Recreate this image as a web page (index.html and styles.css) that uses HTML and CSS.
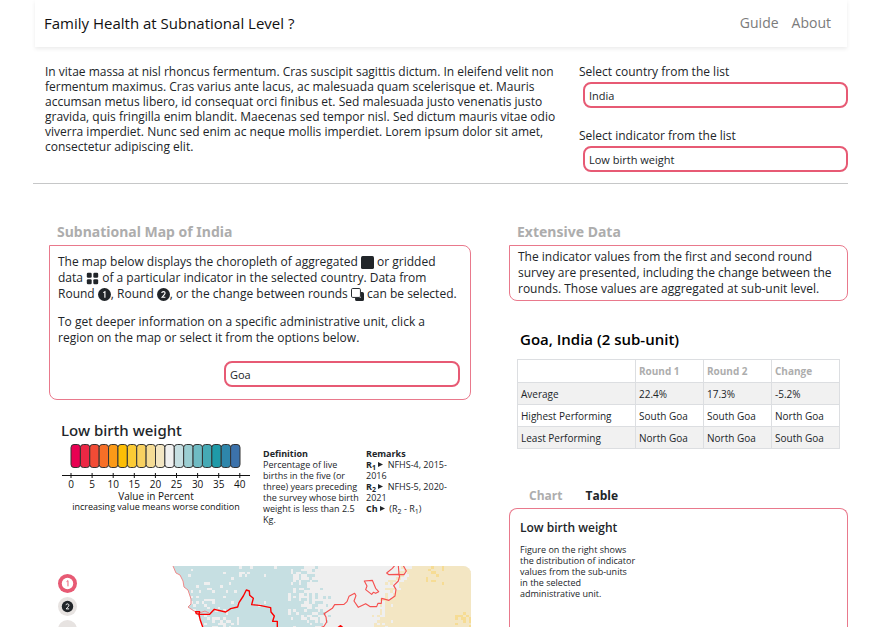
FILE: index.html
```html
<!DOCTYPE html>
<html lang="en">
<head>
<meta charset="utf-8">
<title>Family Health at Subnational Level</title>
<meta name="viewport" content="width=device-width, initial-scale=1">
<link rel="stylesheet" href="styles.css">
</head>
<body>
<div class="page">
  <header class="navbar">
    <h1 class="brand">Family Health at Subnational Level ?</h1>
    <nav class="links">
      <a href="#guide">Guide</a>
      <a href="#about">About</a>
    </nav>
  </header>

  <section class="intro">
    <p class="intro-text">In vitae massa at nisl rhoncus fermentum. Cras suscipit sagittis dictum. In eleifend velit non fermentum maximus. Cras varius ante lacus, ac malesuada quam scelerisque et. Mauris accumsan metus libero, id consequat orci finibus et. Sed malesuada justo venenatis justo gravida, quis fringilla enim blandit. Maecenas sed tempor nisl. Sed dictum mauris vitae odio viverra imperdiet. Nunc sed enim ac neque mollis imperdiet. Lorem ipsum dolor sit amet, consectetur adipiscing elit.</p>
    <div class="filters">
      <div class="field">
        <label for="country">Select country from the list</label>
        <select id="country" class="picker"><option>India</option></select>
      </div>
      <div class="field">
        <label for="indicator">Select indicator from the list</label>
        <select id="indicator" class="picker"><option>Low birth weight</option></select>
      </div>
    </div>
  </section>

  <main class="columns">
    <section class="map-column">
      <h2 class="section-title">Subnational Map of India</h2>
      <div class="card map-card">
        <p>The map below displays the choropleth of aggregated
          <svg class="icon" viewBox="0 0 16 16"><rect width="16" height="16" rx="2"/></svg>
          or gridded data
          <svg class="icon" viewBox="0 0 16 16"><rect x="1" y="1" width="6" height="6" rx="1.5"/><rect x="9" y="1" width="6" height="6" rx="1.5"/><rect x="1" y="9" width="6" height="6" rx="1.5"/><rect x="9" y="9" width="6" height="6" rx="1.5"/></svg>
          of a particular indicator in the selected country. Data from Round
          <svg class="icon" viewBox="0 0 16 16"><circle cx="8" cy="8" r="8"/><path d="M6.5 5.7 8.5 4.5V12" class="mark"/></svg>, Round
          <svg class="icon" viewBox="0 0 16 16"><circle cx="8" cy="8" r="8"/><path d="M5.9 6.3C5.9 3.8 10 3.9 10 6.3 10 7.8 7.6 9.4 6.2 11.4H10.3" class="mark"/></svg>, or the change between rounds
          <svg class="icon" viewBox="0 0 16 16"><path d="M5 12h7V5h2a2 2 0 0 1 2 2v7a2 2 0 0 1-2 2H7a2 2 0 0 1-2-2z"/><rect x=".6" y=".6" width="11" height="11" rx="1.5" class="hollow"/></svg>
          can be selected.</p>
        <p>To get deeper information on a specific administrative unit, click a region on the map or select it from the options below.</p>
        <select class="picker region" aria-label="Region"><option>Goa</option></select>
      </div>

      <div class="legend-row">
        <div class="legend">
          <h3 class="legend-title">Low birth weight</h3>
          <svg class="scale" viewBox="0 0 190 72" id="scale">
            <g id="swatches"></g>
            <path class="axis" d="M1 32.5H189"/>
            <g id="ticks"></g>
            <text x="95" y="57" class="scale-name">Value in Percent</text>
            <text x="95" y="67" class="scale-note">increasing value means worse condition</text>
          </svg>
        </div>
        <div class="note definition">
          <strong>Definition</strong>
          <p>Percentage of live births in the five (or three) years preceding the survey whose birth weight is less than 2.5 Kg.</p>
        </div>
        <div class="note remarks">
          <strong>Remarks</strong>
          <p><b>R<sub>1</sub></b> <svg class="arrow" viewBox="0 0 6 6"><path d="M0 0 6 3 0 6z"/></svg> NFHS-4, 2015-2016</p>
          <p><b>R<sub>2</sub></b> <svg class="arrow" viewBox="0 0 6 6"><path d="M0 0 6 3 0 6z"/></svg> NFHS-5, 2020-2021</p>
          <p><b>Ch</b> <svg class="arrow" viewBox="0 0 6 6"><path d="M0 0 6 3 0 6z"/></svg> (R<sub>2</sub> - R<sub>1</sub>)</p>
        </div>
      </div>

      <div class="map">
        <svg class="map-art" viewBox="0 0 422 200" role="img" aria-label="Gridded map">
          <defs>
            <clipPath id="land"><path d="M124 0 127 7 131 9 134 15 135 21 139 24 142 33 142 38 139 41 147 46 152 55 155 62 190 200H422V0z"/></clipPath>
          </defs>
          <g clip-path="url(#land)" id="cells" shape-rendering="crispEdges"></g>
          <path class="coast" d="M124 0 127 7 131 9 134 15 135 21 139 24 142 33 142 38 139 41 145 45 150 47 156 45 160 47"/>
          <g transform="translate(110 -5) scale(.3333)">
            <path class="border bold" d="M110 152H122L120 160 112 158zM120 160 152 160 166 145 200 153 215 143 236 138 240 125 253 105 262 87 271 90 272 103 283 112 278 131 302 133 335 140 336 153 346 165 341 181H355V230M120 160 124 178 133 203 140 230"/>
          </g>
          <g transform="translate(260 -5) scale(.3333)">
            <path class="border" d="M20 206 30 202 45 196 53 183 51 168 45 158 70 142 77 131 105 130 114 122 120 106 137 97 141 104 135 120 148 139 170 128 184 137 203 137 207 127 217 127 218 112 240 118 258 105 261 85 254 74 268 60 272 45 268 40 240 41 233 36 250 22 257 14M268 14 270 40 285 41 292 30 283 14M166 60 190 58 200 82 209 92 200 97 193 94 188 100 170 86 174 75z"/>
            <path class="border bold" d="M85 201 95 194 103 201"/>
          </g>
        </svg>
        <div class="map-tools">
          <button class="tool active" aria-label="Round 1"><svg viewBox="0 0 20 20"><circle cx="10" cy="10" r="6" fill="#fff"/><path d="M9 8 10.5 7V13" class="digit pink"/></svg></button>
          <button class="tool" aria-label="Round 2"><svg viewBox="0 0 20 20"><circle cx="10" cy="10" r="6" fill="#212529"/><path d="M8.4 8.6C8.4 6.8 11.5 6.8 11.5 8.7 11.5 9.8 9.8 11 8.6 12.5H11.7" class="digit"/></svg></button>
          <button class="tool" aria-label="Change"></button>
        </div>
      </div>
    </section>

    <section class="data-column">
      <h2 class="section-title">Extensive Data</h2>
      <div class="card data-card">
        <p>The indicator values from the first and second round survey are presented, including the change between the rounds. Those values are aggregated at sub-unit level.</p>
      </div>
      <h3 class="region-title">Goa, India (2 sub-unit)</h3>
      <table class="summary">
        <thead><tr><th></th><th scope="col">Round 1</th><th scope="col">Round 2</th><th scope="col">Change</th></tr></thead>
        <tbody>
          <tr><td>Average</td><td>22.4%</td><td>17.3%</td><td>-5.2%</td></tr>
          <tr><td>Highest Performing</td><td>South Goa</td><td>South Goa</td><td>North Goa</td></tr>
          <tr><td>Least Performing</td><td>North Goa</td><td>North Goa</td><td>South Goa</td></tr>
        </tbody>
      </table>
      <div class="tabs">
        <button class="tab">Chart</button>
        <button class="tab selected">Table</button>
      </div>
      <div class="panel">
        <h3 class="panel-title">Low birth weight</h3>
        <p class="panel-text">Figure on the right shows the distribution of indicator values from the sub-units<br>in the selected<br>administrative unit.</p>
      </div>
    </section>
  </main>
</div>
<script src="app.js"></script>
</body>
</html>
```
FILE: styles.css
```css
* { box-sizing: border-box; }
body {
  margin: 0;
  height: 100vh;
  overflow: hidden;
  background: #fff;
  color: #212529;
  font-family: "Open Sans", "Noto Sans", sans-serif;
  font-size: 12px;
  line-height: 16px;
}
h1, h2, h3, p { margin: 0; }
button, select { font-family: inherit; color: inherit; }

.page { height: 100%; padding: 0 33px; display: flex; flex-direction: column; }

.navbar {
  display: flex;
  justify-content: space-between;
  align-items: center;
  height: 47px;
  margin: 0 1px 0 2px;
  padding: 0 16px 2px 9px;
  box-shadow: 0 2px 4px rgba(0, 0, 0, .08);
  flex: none;
}
.brand { font-size: 15px; line-height: 24px; font-weight: 400; color: #111; }
.links { display: flex; gap: 13px; }
.links a { color: #7b7b7b; font-size: 14px; line-height: 24px; text-decoration: none; }

.intro {
  display: grid;
  grid-template-columns: 514px 1fr;
  column-gap: 20px;
  padding: 17px 0 11px 12px;
  border-bottom: 1px solid #c6c7c8;
  flex: none;
}
.intro-text { line-height: 15px; }
.filters { display: flex; flex-direction: column; gap: 20px; }
.field { display: flex; flex-direction: column; gap: 2px; }
.field label { line-height: 16px; }
.field .picker { margin-left: 4px; }
.picker {
  appearance: none;
  height: 26px;
  padding: 0 4px;
  border: 2px solid #e75a74;
  border-radius: 8px;
  background: #fff;
  font-size: 11px;
}

.columns {
  flex: 1;
  min-height: 0;
  display: grid;
  grid-template-columns: 422px minmax(0, 1fr);
  column-gap: 38px;
  padding: 38px 0 0 16px;
}
.map-column, .data-column { display: flex; flex-direction: column; min-height: 0; }
.section-title { font-family: "Noto Sans", "Open Sans", sans-serif; font-size: 14px; line-height: 20px; color: #adadad; padding-left: 8px; margin-bottom: 3px; }
.card { border: 1px solid #e9798c; border-radius: 0 8px 8px 8px; flex: none; }
.map-card { display: flex; flex-direction: column; gap: 12px; padding: 8px 10px 12px 8px; }
.map-card .region { width: 236px; align-self: flex-end; margin-top: 3px; }
.data-card { padding: 3px 8px; }
.icon { width: 13px; height: 13px; vertical-align: -3px; fill: #212529; }
.icon .mark { fill: none; stroke: #fff; stroke-width: 1.4; }
.icon .hollow { fill: #fff; stroke: #212529; stroke-width: 1.2; }

.legend-row {
  display: grid;
  grid-template-columns: 190px 96px 96px;
  column-gap: 8px;
  padding: 20px 0 0 12px;
  flex: none;
  height: 166px;
}
.legend-title { font-family: "Noto Sans", "Open Sans", sans-serif; font-size: 15px; line-height: 20px; font-weight: 500; }
.scale { display: block; width: 100%; margin-top: 3px; }
.scale text { font-size: 10px; text-anchor: middle; fill: #111; }
.scale .scale-note { font-size: 9px; }
.swatch { stroke: #333; stroke-width: 1; }
.axis { stroke: #111; stroke-width: 1; fill: none; }
.note { font-size: 9px; line-height: 11px; padding-top: 28px; }
.note strong { display: block; }
.definition { padding-left: 4px; margin-right: -4px; }
.remarks { padding-left: 3px; margin-right: 2px; }
.note sub { font-size: 7px; line-height: 0; vertical-align: -2px; }
.arrow { width: 5px; height: 5px; fill: #212529; vertical-align: 1px; margin-right: 2px; }

.map { position: relative; flex: 1; min-height: 0; overflow: hidden; border-radius: 8px 8px 0 0; }
.map-art { display: block; width: 100%; }
.coast { fill: none; stroke: #f08a8a; stroke-width: 1; }
.border { fill: none; stroke: #f55050; stroke-width: 3.4; stroke-linejoin: round; }
.border.bold { stroke: #fb0000; stroke-width: 4.2; }
.map-tools { position: absolute; left: 9px; top: 8px; display: grid; gap: 4px; }
.tool { width: 19px; height: 19px; padding: 0; border: 0; border-radius: 50%; background: #e7e3e1; }
.tool.active { background: #e75a74; }
.tool svg { display: block; width: 100%; }
.digit { fill: none; stroke: #fff; stroke-width: 1; }
.digit.pink { stroke: #e75a74; }

.region-title { font-size: 15px; line-height: 20px; font-weight: 600; color: #000; padding: 0 11px; margin: 28px 0 10px; }
.summary {
  margin: 0 8px;
  border-collapse: collapse;
  table-layout: fixed;
  font-size: 10px;
  line-height: 14px;
  flex: none;
}
.summary th, .summary td { height: 22px; padding: 0 3px; border: 1px solid #dcdee1; text-align: left; }
.summary th { height: 23px; color: #adadad; }
.summary th:first-child { width: 118px; }
.summary tbody tr:nth-child(odd) { background: #f1f1f1; }

.tabs { display: flex; gap: 23px; padding-left: 20px; margin: 37px 0 2px; flex: none; }
.tab { padding: 0; border: 0; background: none; font-size: 12px; line-height: 20px; font-weight: 700; color: #adadad; }
.tab.selected { color: #212529; }
.panel { flex: 1; min-height: 0; border: 1px solid #e9798c; border-bottom: 0; border-radius: 8px 8px 0 0; padding: 10px; }
.panel-title { font-size: 12px; line-height: 18px; font-weight: 600; }
.panel-text { width: 118px; margin-top: 7px; font-size: 9px; line-height: 11px; }
```
FILE: app.js
```js
const NS = "http://www.w3.org/2000/svg";
function add(parent, tag, attrs, text) {
  const el = document.createElementNS(NS, tag);
  for (const k in attrs) el.setAttribute(k, attrs[k]);
  if (text !== undefined) el.textContent = text;
  parent.appendChild(el);
}

// Colour scale, low to high
const colours = ["#e80052", "#ec2744", "#f24b35", "#f76f27", "#fb9a18", "#fdbe05", "#fbcb35", "#f8d160", "#f5dc95", "#f3e6c3", "#f0f0f0", "#c6dfe2", "#9bced2", "#6fbbc3", "#45aab5", "#1f9aa8", "#2e86ab", "#3c72ab"];
const swatches = document.getElementById("swatches");
const step = 169 / colours.length;
colours.forEach((c, i) => add(swatches, "rect", { class: "swatch", x: 10 + i * step, y: 1.5, width: step, height: 23, rx: 3, fill: c }));
const ticks = document.getElementById("ticks");
for (let i = 0; i <= 8; i++) {
  const x = 10 + i * 21.1;
  add(ticks, "path", { class: "axis", d: `M${x} 30v5` });
  add(ticks, "text", { x, y: 45 }, i * 5);
}

// Gridded cells
let seed = 11;
const rnd = () => (seed = (seed * 16807) % 2147483647) / 2147483647;
const cells = document.getElementById("cells");
const size = 2.7;
const blue = "#c6dfe2", grey = "#efefef", sand = "#f3e6c3", gold = "#f6dc94";
add(cells, "rect", { x: 120, y: 0, width: 302, height: 200, fill: grey });
for (let y = 0; y < 70; y += size) {
  for (let x = 120; x < 422; x += size) {
    const r = rnd();
    const sandEdge = Math.max(330, 356 - y * 0.6);
    const blueEdge = 240 + Math.max(0, y - 6) * 0.3;
    let fill = grey;
    if (x < 284) {
      let p = 0.02;
      if (x > 140 && x < 180 && y > 15) p = 0.15;
      if (x > 140 && x < 190 && y > 50) p = 0.35;
      if (x > 234) p = 0.15;
      if (x > blueEdge) p = 0.3 + (x - blueEdge) / 50;
      if (r > p) fill = blue;
    }
    if (x > sandEdge - 12) {
      const p = (x - sandEdge + 12) / 24;
      if (r < p) fill = sand;
      if (fill === sand && ((x > 374 && x < 394 && y < 18 && r < 0.3) || (x > 406 && y > 43 && r < 0.35))) fill = gold;
    }
    if (fill !== grey) add(cells, "rect", { x, y, width: size + 0.1, height: size + 0.1, fill });
  }
}
```
